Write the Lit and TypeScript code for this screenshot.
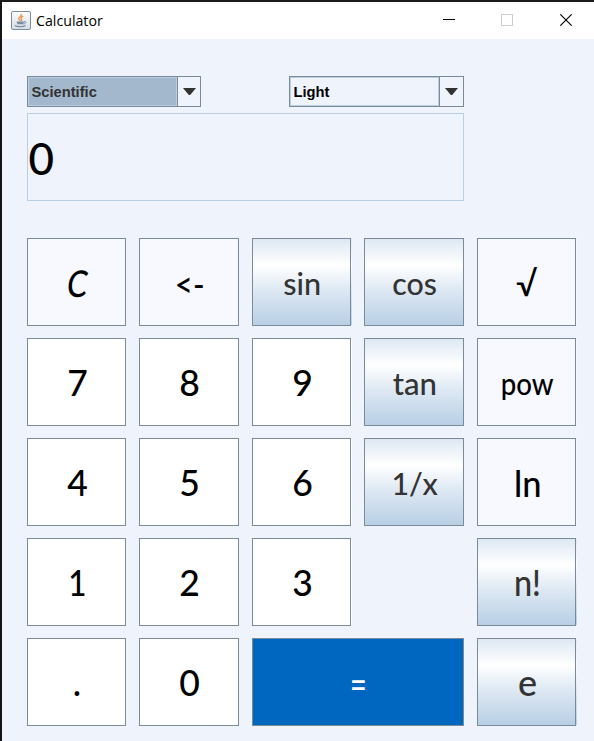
import { LitElement, html, css, svg } from "lit";
import { customElement, property } from "lit/decorators.js";
import { classMap } from "lit/directives/class-map.js";
import { styleMap } from "lit/directives/style-map.js";

type Kind = "digit" | "op" | "metal" | "equals";

interface Key {
  label: string;
  kind: Kind;
  size: number;
  stretch?: number;
  dx?: number;
  dy?: number;
  slant?: boolean;
  gap?: boolean;
}

const digit = (label: string, extra: Partial<Key> = {}): Key => ({
  label, kind: "digit", size: 37, stretch: 0.96, dx: 0.7, dy: -0.6, ...extra,
});
const op = (label: string, size: number, extra: Partial<Key> = {}): Key => ({ label, kind: "op", size, ...extra });
const metal = (label: string, size: number, extra: Partial<Key> = {}): Key => ({ label, kind: "metal", size, ...extra });

const KEYS: Key[] = [
  op("C", 37, { slant: true, stretch: 0.82, dx: 1.5 }),
  op("<-", 34, { stretch: 0.92, dx: 0.5, dy: 2 }),
  metal("sin", 30, { stretch: 1.02, dx: 0.5, dy: 1 }),
  metal("cos", 30, { stretch: 1.01, dx: 0.5, dy: 1 }),
  op("√", 34, { dy: 1 }),
  digit("7"),
  digit("8"),
  digit("9"),
  metal("tan", 30, { stretch: 1.04, dx: 0.5, dy: 0.6 }),
  op("pow", 30, { stretch: 0.92, dx: 0.5, dy: 0.6 }),
  digit("4"),
  digit("5"),
  digit("6"),
  metal("1/x", 31, { stretch: 0.98, dx: 1, dy: 0.5 }),
  op("ln", 37, { stretch: 0.93, dx: 1, dy: -0.5 }),
  digit("1", { stretch: 0.85 }),
  digit("2"),
  digit("3"),
  { label: "", kind: "op", size: 0, gap: true },
  metal("n!", 36, { stretch: 0.9, dx: 0.5 }),
  digit("."),
  digit("0"),
  { label: "=", kind: "equals", size: 39, stretch: 0.74, dy: 0.5 },
  metal("e", 36, { dx: 1 }),
];

@customElement("calc-combo")
export class CalcCombo extends LitElement {
  @property() value = "";
  @property({ type: Boolean }) focused = false;

  static styles = css`
    :host {
      display: flex;
      box-sizing: border-box;
      height: 31px;
      border: 1px solid #7a8a99;
    }
    .value {
      flex: 1;
      display: flex;
      align-items: center;
      border: 1px solid #b8cfe5;
      padding: 1px 0 0 2.5px;
      font: bold 14.7px/1 "Liberation Sans", Arial, sans-serif;
      color: #000;
    }
    .value.focused {
      background: #a3b8cc;
      color: #333;
    }
    .arrow {
      width: var(--arrow-width, 22px);
      border-left: 1px solid #7a8a99;
      display: flex;
      align-items: center;
      justify-content: center;
    }
    svg {
      display: block;
      margin-right: var(--arrow-shift, 0px);
    }
  `;

  render() {
    return html`
      <div class=${classMap({ value: true, focused: this.focused })}>${this.value}</div>
      <div class="arrow">
        <svg width="13" height="7" viewBox="0 0 13 7"><path d="M0 0H13L7.2 7H5.8Z" fill="#333" /></svg>
      </div>
    `;
  }
}

@customElement("calc-key")
export class CalcKey extends LitElement {
  @property({ attribute: false }) key!: Key;

  static styles = css`
    :host {
      display: block;
    }
    .key {
      position: relative;
      box-sizing: border-box;
      height: 100%;
      border: 1px solid #7a8a99;
      display: flex;
      align-items: center;
      justify-content: center;
      color: #000;
    }
    :host(.bleed) .key::after {
      content: "";
      position: absolute;
      top: 0;
      right: -2px;
      width: 1px;
      height: 100%;
      background: inherit;
    }
    .digit {
      background: #fff;
    }
    .op {
      background: #f7f9fe;
    }
    .metal {
      background: linear-gradient(#dde8f3 0%, #fff 30%, #dde8f3 60%, #b8cfe5 100%);
      color: #333;
    }
    .equals {
      background: #0067c0;
      color: #fff;
    }
    .label {
      font-family: "Comic Sans MS", Lato, sans-serif;
      font-weight: 500;
      line-height: 1;
      white-space: pre;
    }
  `;

  render() {
    const k = this.key;
    const label = {
      fontSize: `${k.size}px`,
      transform: `translate(${k.dx ?? 0}px, ${k.dy ?? 0}px) scaleX(${k.stretch ?? 1})${k.slant ? " skewX(-10deg)" : ""}`,
    };
    return html`<div class="key ${k.kind}"><span class="label" style=${styleMap(label)}>${k.label}</span></div>`;
  }
}

@customElement("app-root")
export class AppRoot extends LitElement {
  static styles = css`
    :host {
      display: block;
      box-sizing: border-box;
      width: 594px;
      height: 741px;
      overflow: hidden;
      background: #eff3fb;
      border-top: 2px solid #1c1a1c;
      border-left: 2px solid #151517;
    }
    .titlebar {
      display: flex;
      align-items: center;
      height: 37px;
      background: #fff;
      padding-left: 9px;
    }
    .title {
      flex: 1;
      margin-left: 5px;
      font: 14.2px/20px "Segoe UI", "Open Sans", sans-serif;
      color: #000;
    }
    .window-buttons {
      display: flex;
      gap: 46px;
      padding: 0 22px 1px 0;
    }
    .close {
      margin-left: 1px;
    }
    svg {
      display: block;
    }
    .content {
      padding: 37px 16px 0 25px;
    }
    .combos {
      display: flex;
      justify-content: space-between;
      width: 437px;
    }
    .mode {
      width: 174px;
    }
    .theme {
      width: 175px;
      --arrow-width: 23px;
      --arrow-shift: 1px;
    }
    .display {
      box-sizing: border-box;
      width: 437px;
      height: 88px;
      margin-top: 6px;
      padding: 1px 0 0 0.5px;
      border: 1px solid #b8cfe5;
      display: flex;
      align-items: center;
      font: 500 44px/1 "Comic Sans MS", Lato, sans-serif;
      color: #000;
    }
    .keys {
      margin-top: 37px;
      display: grid;
      grid-template-columns: 99px 100px 99px 100px 99px;
      grid-auto-rows: 88px;
      gap: 12px 13px;
    }
    .wide {
      grid-column: span 2;
    }
  `;

  private keyCell(k: Key) {
    if (k.gap) return html`<span></span>`;
    const bleed = ["sin", "√", "9", "pow", "6", "ln", "3", "n!", "e"].includes(k.label);
    return html`<calc-key class=${classMap({ wide: k.kind === "equals", bleed })} .key=${k}></calc-key>`;
  }

  private javaIcon() {
    return svg`
      <defs>
        <linearGradient id="tile" x1="0" y1="0" x2="0" y2="1">
          <stop offset="0" stop-color="#fdfdfd" />
          <stop offset="1" stop-color="#d5dde4" />
        </linearGradient>
      </defs>
      <rect x="0.5" y="0.5" width="19" height="18" rx="1.5" fill="url(#tile)" stroke="#7890a4" />
      <path d="M10.3 3C11.2 5 7.3 6 7.7 7.7C7.9 8.7 9 9 9.3 10M12.2 5.2C10 6.2 9.4 7 10.4 8.2C10.9 9 10.6 9.5 10.2 10" fill="none" stroke="#ee8e4a" stroke-width="1.3" />
      <path d="M5.5 10.5H13L12.3 13.2H6.4Z" fill="#7890a6" />
      <path d="M13 10.8C15.7 9.8 15.6 12.6 12.4 13" fill="none" stroke="#7890a6" />
      <path d="M3.8 14.4C6 16 12.5 16 14.6 14.4" fill="none" stroke="#7890a6" stroke-width="1.2" />
    `;
  }

  render() {
    return html`
      <div class="titlebar">
        <svg width="20" height="19" viewBox="0 0 20 19">${this.javaIcon()}</svg>
        <span class="title">Calculator</span>
        <span class="window-buttons">
          <svg width="12" height="12"><path d="M0 5.5H12" stroke="#000" /></svg>
          <svg width="12" height="12"><rect x="0.5" y="0.5" width="11" height="11" fill="none" stroke="#ccc" /></svg>
          <svg class="close" width="12" height="12"><path d="M0.3 0.3L11.7 11.7M11.7 0.3L0.3 11.7" stroke="#000" stroke-width="1.1" /></svg>
        </span>
      </div>
      <div class="content">
        <div class="combos">
          <calc-combo class="mode" value="Scientific" focused></calc-combo>
          <calc-combo class="theme" value="Light"></calc-combo>
        </div>
        <div class="display">0</div>
        <div class="keys">${KEYS.map((k) => this.keyCell(k))}</div>
      </div>
    `;
  }
}
